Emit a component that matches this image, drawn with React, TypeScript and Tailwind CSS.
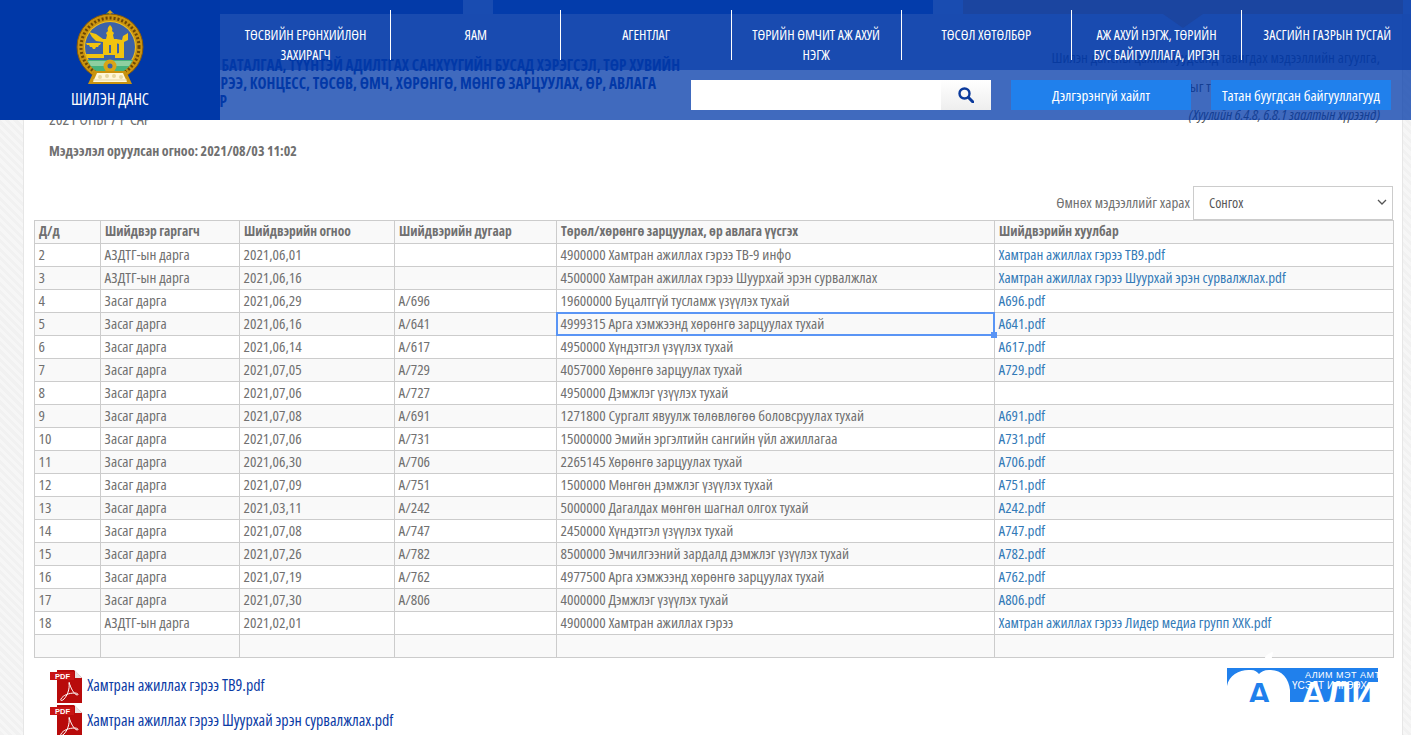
const navItems = [
  "Төсвийн ерөнхийлөн захирагч",
  "Яам",
  "Агентлаг",
  "Төрийн өмчит аж ахуй нэгж",
  "Төсөл хөтөлбөр",
  "Аж ахуй нэгж, төрийн бус байгууллага, иргэн",
  "Засгийн газрын тусгай",
];

const rows = [
  ["2", "АЗДТГ-ын дарга", "2021,06,01", "", "4900000 Хамтран ажиллах гэрээ ТВ-9 инфо", "Хамтран ажиллах гэрээ ТВ9.pdf"],
  ["3", "АЗДТГ-ын дарга", "2021,06,16", "", "4500000 Хамтран ажиллах гэрээ Шуурхай эрэн сурвалжлах", "Хамтран ажиллах гэрээ Шуурхай эрэн сурвалжлах.pdf"],
  ["4", "Засаг дарга", "2021,06,29", "А/696", "19600000 Буцалтгүй тусламж үзүүлэх тухай", "А696.pdf"],
  ["5", "Засаг дарга", "2021,06,16", "А/641", "4999315 Арга хэмжээнд хөрөнгө зарцуулах тухай", "А641.pdf"],
  ["6", "Засаг дарга", "2021,06,14", "А/617", "4950000 Хүндэтгэл үзүүлэх тухай", "А617.pdf"],
  ["7", "Засаг дарга", "2021,07,05", "А/729", "4057000 Хөрөнгө зарцуулах тухай", "А729.pdf"],
  ["8", "Засаг дарга", "2021,07,06", "А/727", "4950000 Дэмжлэг үзүүлэх тухай", ""],
  ["9", "Засаг дарга", "2021,07,08", "А/691", "1271800 Сургалт явуулж төлөвлөгөө боловсруулах тухай", "А691.pdf"],
  ["10", "Засаг дарга", "2021,07,06", "А/731", "15000000 Эмийн эргэлтийн сангийн үйл ажиллагаа", "А731.pdf"],
  ["11", "Засаг дарга", "2021,06,30", "А/706", "2265145 Хөрөнгө зарцуулах тухай", "А706.pdf"],
  ["12", "Засаг дарга", "2021,07,09", "А/751", "1500000 Мөнгөн дэмжлэг үзүүлэх тухай", "А751.pdf"],
  ["13", "Засаг дарга", "2021,03,11", "А/242", "5000000 Дагалдах мөнгөн шагнал олгох тухай", "А242.pdf"],
  ["14", "Засаг дарга", "2021,07,08", "А/747", "2450000 Хүндэтгэл үзүүлэх тухай", "А747.pdf"],
  ["15", "Засаг дарга", "2021,07,26", "А/782", "8500000 Эмчилгээний зардалд дэмжлэг үзүүлэх тухай", "А782.pdf"],
  ["16", "Засаг дарга", "2021,07,19", "А/762", "4977500 Арга хэмжээнд хөрөнгө зарцуулах тухай", "А762.pdf"],
  ["17", "Засаг дарга", "2021,07,30", "А/806", "4000000 Дэмжлэг үзүүлэх тухай", "А806.pdf"],
  ["18", "АЗДТГ-ын дарга", "2021,02,01", "", "4900000 Хамтран ажиллах гэрээ", "Хамтран ажиллах гэрээ Лидер медиа групп ХХК.pdf"],
  ["", "", "", "", "", ""],
];

const headers = ["Д/д", "Шийдвэр гаргагч", "Шийдвэрийн огноо", "Шийдвэрийн дугаар", "Төрөл/хөрөнгө зарцуулах, өр авлага үүсгэх", "Шийдвэрийн хуулбар"];
const colClasses = ["w-[66px]", "w-[139px]", "w-[155px]", "w-[162px]", "w-[438px]", "w-[399px]"];

function Emblem() {
  return (
    <svg width="68" height="76" viewBox="0 0 68 76" className="mt-[10px]">
      <path d="M34 0l3 3v2h-6V3z" fill="#d9a514" />
      <rect x="30" y="3" width="3" height="3" fill="#2f7d4f" />
      <rect x="35" y="3" width="3" height="3" fill="#3c62a8" />
      <circle cx="34" cy="37" r="33" fill="#c9930f" stroke="#8a5a07" strokeWidth="1" />
      <circle cx="34" cy="37" r="29" fill="none" stroke="#6b4606" strokeWidth="3" strokeDasharray="2 2" />
      <circle cx="34" cy="37" r="26" fill="#f0c020" />
      <circle cx="34" cy="37" r="25" fill="#3c62a8" />
      <path d="M11 50a25 25 0 0 0 46 0z" fill="#46b27c" />
      <path d="M12 51h44l-3 5H15z" fill="#8ecfa0" />
      {/* soyombo and horse */}
      <path d="M13 22l7 2 7 5v3l-7-1-4-4z" fill="#f2c40f" />
      <path d="M10 33h15l-1 2h-1l-1 2h-2l-1 2h-2l-1-2h-2l-1-2h-2z" fill="#f2c40f" />
      <path d="M27 29h14v16H27z" fill="#f2c40f" />
      <path d="M34 15c2 2 3 4 2 6l2 2-1 2 1 4H30l1-4-1-2 2-2c-1-2 0-4 2-6z" fill="#f2c40f" />
      <path d="M10 44h18v4H11z" fill="#f2c40f" />
      <path d="M40 29l6 1 1-4 5-3v7l-4 2v16H39v-4l4-1v-9l-3-1z" fill="#f2c40f" />
      <rect x="33" y="35" width="2" height="8" fill="#3c62a8" />
      <circle cx="34" cy="56" r="6.5" fill="#d9a514" />
      <circle cx="34" cy="56" r="2.5" fill="#3c62a8" />
      {/* lotus base */}
      <path d="M12 74l6-13h32l6 13z" fill="#c9930f" />
      <path d="M17 72l4-9h26l4 9z" fill="#fff6d8" />
      <circle cx="24" cy="67" r="2" fill="#e8d7a0" />
      <circle cx="31" cy="66" r="2" fill="#e8d7a0" />
      <circle cx="38" cy="66" r="2" fill="#e8d7a0" />
      <circle cx="45" cy="67" r="2" fill="#e8d7a0" />
      <path d="M17 70h34" stroke="#e8d7a0" strokeWidth="1" />
    </svg>
  );
}

function PdfIcon() {
  return (
    <svg width="32" height="34" viewBox="0 0 32 34" className="shrink-0">
      <path d="M7 1h17l8 8v25H7z" fill="#b80b0b" />
      <path d="M25 1l7 8h-7z" fill="#e9e4e4" />
      <rect x="0" y="3" width="24" height="8" fill="#c81414" />
      <text x="5" y="10" fontSize="7.5" fontWeight="700" fill="#fff" fontFamily="'Liberation Sans',sans-serif">PDF</text>
      <path d="M19 13c2 7 5 12 8 13 2 0 1-2-2-2-6 0-12 2-14 6-1 2 1 2 3 0 3-3 6-10 5-16" fill="none" stroke="#fff" strokeWidth="1" />
    </svg>
  );
}

function PdfLink({ name }: { name: string }) {
  return (
    <div className="flex h-[35px] items-center gap-[5px]">
      <PdfIcon />
      <a className="pb-[2px] text-[16px] text-[#0b3ba5]">{name}</a>
    </div>
  );
}

function AlimBanner() {
  return (
    <svg width="151" height="50" viewBox="0 0 151 50" className="block shrink-0 -mt-[16px]">
      <rect x="0" y="16" width="151" height="14" fill="#2080ec" />
      <rect x="0" y="30" width="146" height="20" fill="#2080ec" />
      <path d="M46 0c-6 1-10 6-11 16 7-1 10-8 11-16z" fill="#fff" />
      <path d="M0 34c2-12 14-17 24-16 4 0 6 2 8 4 2-2 5-4 10-4 12-1 20 8 21 20v12H0z" fill="#fff" />
      <text x="78" y="26" fontSize="9" fill="#fff" fontFamily="'Liberation Sans',sans-serif" letterSpacing="0.5">АЛИМ МЭТ АМТ</text>
      <text x="65" y="37" fontSize="10" fill="#fff" fontFamily="'Liberation Sans',sans-serif">ҮСЭЛТ ИЛГЭЭХ</text>
      <text x="20" y="54" fontSize="34" fontWeight="700" fill="#2080ec" fontFamily="'Liberation Sans',sans-serif">А</text>
      <text x="74" y="54" fontSize="35" fontWeight="700" fill="#fff" fontFamily="'Liberation Sans',sans-serif">АЛИ</text>
    </svg>
  );
}

function Header() {
  return (
    <header className="absolute left-0 top-0 flex h-[120px] w-full text-white">
      <div className="flex w-[220px] shrink-0 flex-col items-center bg-[#0038a8]">
        <Emblem />
        <div className="mt-[3px] text-[16px] leading-[20px]">ШИЛЭН ДАНС</div>
      </div>
      <div className="relative flex-1">
        <div className="flex h-[14px] bg-[#194cb1]">
          <div className="w-[243px] bg-[#033aa8]" />
          <div className="ml-[30px] w-[440px] bg-[#033cab]" />
          <div className="ml-[30px] w-[440px] bg-[#1b45a0]" />
        </div>
        <div className="flex h-[56px] items-start bg-[#0038a8]/90">
          <nav className="-mt-[4px] ml-px flex h-[50px]">
            {navItems.map((item, i) => (
              <div
                key={item}
                className={`relative w-[170.2px] shrink-0 pt-[15px] text-center text-[14px] uppercase leading-[20px] ${i < 6 ? "border-r border-white px-[16px]" : "whitespace-nowrap"}`}
              >
                {item}
              </div>
            ))}
          </nav>
        </div>
        <div className="absolute left-[943px] top-[14px] h-0 w-0 border-x-[20px] border-t-[14px] border-x-transparent border-t-[#1b45a0]" />
        <div className="flex h-[50px] items-center bg-[#0038a8]/75 pl-[471px]">
          <div className="h-[30px] w-[250px] bg-white" />
          <div className="flex h-[30px] w-[50px] items-center justify-center bg-gradient-to-b from-white to-[#eeeeee]">
            <svg width="16" height="16" viewBox="0 0 16 16" fill="none" stroke="#0b3a9c" strokeWidth="2.4">
              <circle cx="6.5" cy="6.5" r="5" />
              <path d="M10.5 10.5L15 15" strokeLinecap="round" strokeWidth="3" />
            </svg>
          </div>
          <div className="ml-[20px] flex h-[30px] w-[180px] items-center justify-center whitespace-nowrap bg-[#2080ec] text-[15px]">Дэлгэрэнгүй хайлт</div>
          <div className="ml-[20px] flex h-[30px] w-[180px] items-center justify-center whitespace-nowrap bg-[#2080ec] text-[15px]">Татан буугдсан байгууллагууд</div>
        </div>
      </div>
    </header>
  );
}

export default function App() {
  return (
    <div className="relative h-[735px] overflow-hidden bg-[repeating-linear-gradient(45deg,#f1f1f1_0_3px,#f6f6f6_3px_6px)] font-['Open_Sans',sans-serif] font-stretch-condensed">
      <div className="ml-[23px] mr-[8px] h-full border-x border-[#e6e6e6] bg-white pl-[10px] pr-[9px] text-[#707070]">
        {/* title row, mostly under the header */}
        <div className="flex h-[125px] justify-between pl-[15px] pt-[56px]">
          <div>
            <div className="text-[15.25px] font-bold uppercase leading-[18px] text-[#0b3ba5]">
              <p className="flex w-[631px] justify-end whitespace-nowrap">Зээл, өрийн бичиг, батлан даалт, баталгаа, түүнтэй адилтгах санхүүгийн бусад хэрэгсэл, төр хувийн</p>
              <p className="flex w-[607px] justify-end whitespace-nowrap">хэвшлийн түншлэлийн гэрээ, концесс, төсөв, өмч, хөрөнгө, мөнгө зарцуулах, өр, авлага</p>
              <p className="flex w-[178px] justify-end whitespace-nowrap">үүсгэх шийдвэр</p>
            </div>
            <p className="-mt-px text-[16px] leading-[20px]">2021 ОНЫ 7 Р САР</p>
          </div>
          <div className="mr-[13px] -mt-[5px] text-right text-[15px] text-[#555555]">
            <p className="leading-[12px]">Шилэн дансны цахим хуудсанд тавигдах мэдээллийн агуулга,</p>
            <p className="mr-[100px] mt-[15px] leading-[16px]">маягтыг төрөлжүүлсэн</p>
            <p className="mt-[12px] italic leading-[16px]">(Хуулийн 6.4.8, 6.8.1 заалтын хүрээнд)</p>
          </div>
        </div>
        <p className="mt-[16px] pl-[15px] text-[14px] font-bold leading-[20px]">Мэдээлэл оруулсан огноо: 2021/08/03 11:02</p>

        <div className="mt-[25px] flex h-[34px] items-center justify-end gap-[3px] pb-[2px] text-[15px]">
          <span>Өмнөх мэдээллийг харах</span>
          <div className="-mb-[2px] flex h-[34px] w-[200px] items-center justify-between border border-[#cccccc] pb-[2px] pl-[15px] pr-[5px] text-[14px] text-[#555555]">
            <span>Сонгох</span>
            <svg width="10" height="6" viewBox="0 0 10 6" fill="none" stroke="#555555" strokeWidth="1.3">
              <path d="M1 1l4 4 4-4" />
            </svg>
          </div>
        </div>

        <table className="w-[1359px] table-fixed border-collapse text-[15.15px] leading-[20px]">
          <thead>
            <tr className="h-[23px] bg-[#f9f9f9]">
              {headers.map((h, i) => (
                <th key={h} className={`${colClasses[i]} border border-[#cccccc] px-[4px] pb-[2px] pt-0 text-left text-[13.5px] font-bold`}>{h}</th>
              ))}
            </tr>
          </thead>
          <tbody>
            {rows.map((row, r) => (
              <tr key={r} className={`h-[23px] ${r % 2 === 1 ? "bg-[#f9f9f9]" : "bg-white"}`}>
                {row.map((cell, c) => (
                  <td
                    key={c}
                    className={`border border-[#cccccc] px-[3.5px] pb-[2px] pt-0 whitespace-nowrap ${c === 5 ? "text-[15px] text-[#337ab7]" : ""} ${r === 3 && c === 4 ? "relative" : ""}`}
                  >
                    {cell}
                    {r === 3 && c === 4 && (
                      <>
                        <div className="pointer-events-none absolute -inset-px border-2 border-[#5a95f5]" />
                        <div className="absolute -bottom-[3px] -right-[3px] h-[6px] w-[6px] bg-[#5a95f5]" />
                      </>
                    )}
                  </td>
                ))}
              </tr>
            ))}
          </tbody>
        </table>

        <div className="mt-[10px] flex items-start justify-between pl-[16px] pr-[15px]">
          <div>
            <PdfLink name="Хамтран ажиллах гэрээ ТВ9.pdf" />
            <PdfLink name="Хамтран ажиллах гэрээ Шуурхай эрэн сурвалжлах.pdf" />
          </div>
          <AlimBanner />
        </div>
      </div>
      <Header />
    </div>
  );
}
